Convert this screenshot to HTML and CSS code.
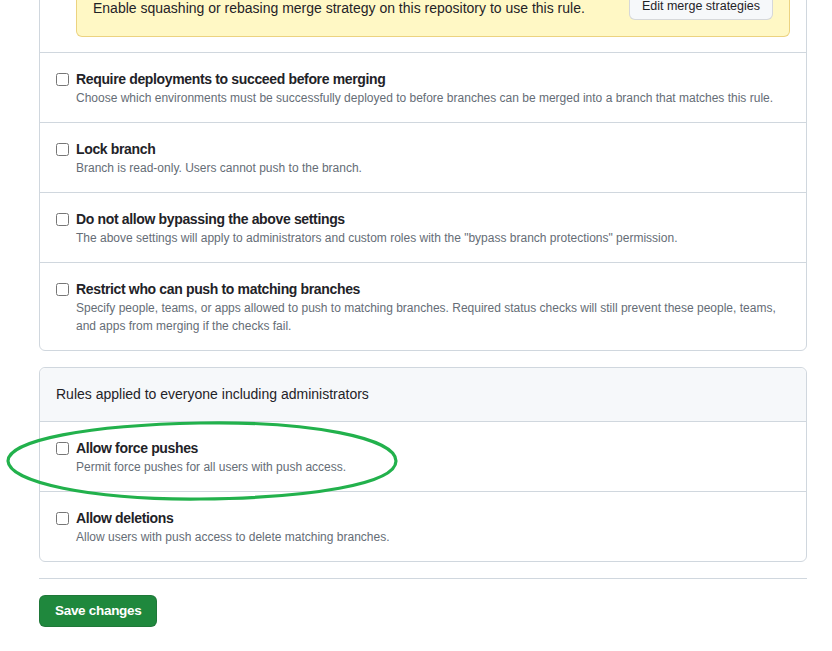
FILE: index.html
```html
<!DOCTYPE html>
<html>
<head>
<meta charset="utf-8">
<link rel="stylesheet" href="styles.css">
</head>
<body>
<div class="page">
  <div class="box">
    <div class="row">
      <div class="flash">
        <span class="flash-text">Enable squashing or rebasing merge strategy on this repository to use this rule.</span>
        <button class="btn-sm">Edit merge strategies</button>
      </div>
    </div>
    <div class="row">
      <label class="check"><input type="checkbox"><span class="title">Require deployments to succeed before merging</span></label>
      <p class="note">Choose which environments must be successfully deployed to before branches can be merged into a branch that matches this rule.</p>
    </div>
    <div class="row">
      <label class="check"><input type="checkbox"><span class="title">Lock branch</span></label>
      <p class="note">Branch is read-only. Users cannot push to the branch.</p>
    </div>
    <div class="row">
      <label class="check"><input type="checkbox"><span class="title">Do not allow bypassing the above settings</span></label>
      <p class="note">The above settings will apply to administrators and custom roles with the "bypass branch protections" permission.</p>
    </div>
    <div class="row">
      <label class="check"><input type="checkbox"><span class="title">Restrict who can push to matching branches</span></label>
      <p class="note">Specify people, teams, or apps allowed to push to matching branches. Required status checks will still prevent these people, teams, and apps from merging if the checks fail.</p>
    </div>
  </div>

  <div class="box second">
    <div class="header">Rules applied to everyone including administrators</div>
    <div class="row">
      <label class="check"><input type="checkbox"><span class="title">Allow force pushes</span></label>
      <p class="note">Permit force pushes for all users with push access.</p>
    </div>
    <div class="row">
      <label class="check"><input type="checkbox"><span class="title">Allow deletions</span></label>
      <p class="note">Allow users with push access to delete matching branches.</p>
    </div>
  </div>

  <hr class="divider">
  <button class="btn-primary">Save changes</button>
</div>

<svg class="circle" width="832" height="651" viewBox="0 0 832 651">
  <path d="M 200 423 C 310 421 396 438 396 461 C 396 484 310 498 200 499 C 90 500 9 482 8 461 C 8 440 90 425 200 423 Z" fill="none" stroke="#22b14c" stroke-width="3.2"/>
</svg>
</body>
</html>
```

FILE: styles.css
```css
* { box-sizing: border-box; }
html, body { margin: 0; padding: 0; background: #ffffff; }
body {
  font-family: "Segoe UI", "Liberation Sans", Arial, sans-serif;
  color: #1f2328;
  font-size: 14px;
  line-height: 1.5;
  overflow: hidden;
  height: 651px;
}
.page {
  width: 768px;
  margin-left: 39px;
  margin-top: -42px;
}
.box {
  border: 1px solid #d0d7de;
  border-radius: 6px;
  background: #fff;
}
.second { margin-top: 16px; }
.header {
  background: #f6f8fa;
  padding: 16px;
  font-size: 14px;
  color: #1f2328;
  border-bottom: 1px solid #d0d7de;
  border-radius: 6px 6px 0 0;
}
.row {
  padding: 15px 16px;
  border-top: 1px solid #d0d7de;
}
.row:first-child { border-top: 0; padding-top: 16px; padding-bottom: 15px; }
.header + .row { border-top: 0; }
.flash {
  margin-left: 20px;
  background: #fff8c5;
  border: 1px solid rgba(212, 167, 44, 0.45);
  border-radius: 6px;
  padding: 16px;
  display: flex;
  align-items: center;
  justify-content: space-between;
  font-size: 14px;
}
.flash-text { margin-top: 4px; }
.btn-sm {
  height: 28px;
  padding: 0 12px;
  font: inherit;
  font-size: 12.5px;
  font-weight: 500;
  color: #1f2328;
  background: #f6f8fa;
  border: 1px solid rgba(31, 35, 40, 0.15);
  border-radius: 6px;
}
.check {
  display: flex;
  align-items: flex-start;
  padding-top: 1px;
}
.check input {
  width: 13px;
  height: 13px;
  margin: 4px 7px 0 0;
  flex: none;
}
.title {
  font-weight: 700;
  font-size: 14px;
  line-height: 21px;
  letter-spacing: -0.35px;
}
.note {
  margin: -1px 0 0 20px;
  font-size: 12px;
  line-height: 18px;
  color: #656d76;
}
.divider {
  border: 0;
  border-top: 1px solid #d0d7de;
  margin: 16px 0;
  height: 0;
}
.btn-primary {
  height: 32px;
  padding: 0 15px;
  font: inherit;
  font-size: 13.5px;
  font-weight: 700;
  letter-spacing: -0.3px;
  color: #fff;
  background: #1f883d;
  border: 1px solid rgba(31, 35, 40, 0.15);
  border-radius: 6px;
}
.circle {
  position: absolute;
  left: 0;
  top: 0;
  pointer-events: none;
}
```
